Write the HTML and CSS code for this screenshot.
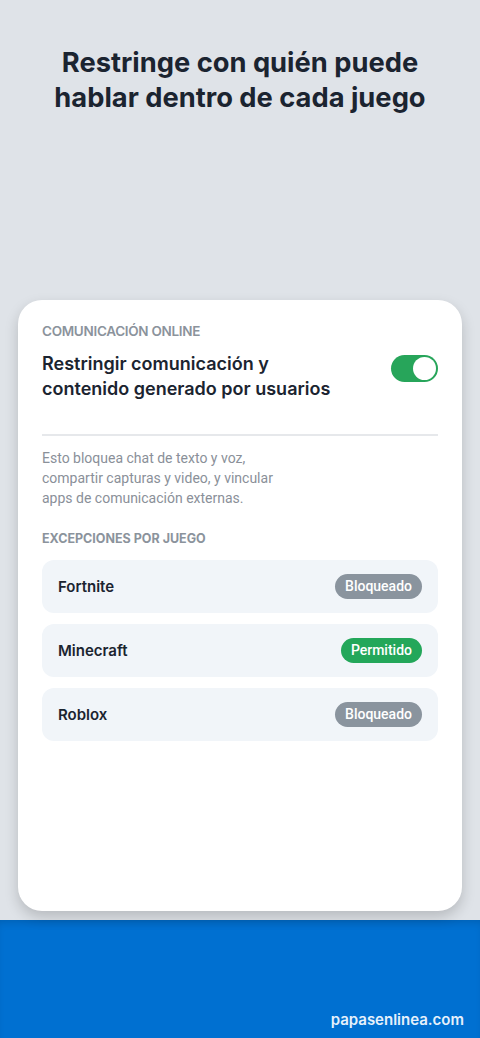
FILE: index.html
```html
<!DOCTYPE html>
<html lang="es">
<head>
    <meta charset="UTF-8">
    <meta name="viewport" content="width=device-width, initial-scale=1.0">
    <title>Comunicación online</title>
    <link rel="stylesheet" href="styles.css">
</head>
<body>
    <div class="page">
        <h1 class="headline">Restringe con quién puede hablar dentro de cada juego</h1>

        <div class="card">
            <div class="eyebrow">COMUNICACIÓN ONLINE</div>
            <div class="setting">
                <div class="setting-title">Restringir comunicación y contenido generado por usuarios</div>
                <div class="toggle on"><span class="knob"></span></div>
            </div>
            <div class="divider"></div>
            <p class="desc">Esto bloquea chat de texto y voz, compartir capturas y video, y vincular apps de comunicación externas.</p>

            <div class="section-label">EXCEPCIONES POR JUEGO</div>
            <div class="game-list">
                <div class="game">
                    <span class="game-name">Fortnite</span>
                    <span class="badge blocked">Bloqueado</span>
                </div>
                <div class="game">
                    <span class="game-name">Minecraft</span>
                    <span class="badge allowed">Permitido</span>
                </div>
                <div class="game">
                    <span class="game-name">Roblox</span>
                    <span class="badge blocked">Bloqueado</span>
                </div>
            </div>
        </div>
    </div>

    <footer class="footer">
        <span class="brand">papasenlinea.com</span>
    </footer>
</body>
</html>
```

FILE: styles.css
```css
body {
    margin: 0;
    font-family: Inter, "Noto Sans", sans-serif;
    background-color: #dfe3e8;
    color: #1b2430;
}
.page {
    height: 920px;
    padding: 0 18px 9px;
    box-sizing: border-box;
    display: flex;
    flex-direction: column;
}
.headline {
    margin: 45px 20px 0;
    font-size: 27.3px;
    line-height: 35px;
    font-weight: 700;
    text-align: center;
}
.card {
    margin-top: auto;
    height: 611px;
    box-sizing: border-box;
    background-color: #fff;
    border-radius: 24px;
    padding: 23px 24px;
    box-shadow: 0 6px 14px rgba(0, 0, 0, 0.18);
}
.eyebrow {
    font-size: 13.5px;
    font-weight: 600;
    color: #8b939c;
    letter-spacing: -0.3px;
}
.setting {
    display: flex;
    justify-content: space-between;
    align-items: flex-start;
    margin-top: 12px;
}
.setting-title {
    font-size: 18px;
    line-height: 25px;
    font-weight: 600;
    width: 300px;
}
.toggle {
    width: 47px;
    height: 27px;
    border-radius: 14px;
    background-color: #27a55a;
    margin-top: 4px;
    box-sizing: border-box;
    padding: 2px;
    display: flex;
    justify-content: flex-end;
}
.knob {
    width: 23px;
    height: 23px;
    border-radius: 50%;
    background-color: #fff;
}
.divider {
    height: 2px;
    background-color: #e6e8eb;
    margin-top: 33px;
}
.desc {
    margin: 12px 0 0;
    width: 240px;
    font-family: Roboto, sans-serif;
    font-size: 14px;
    line-height: 20px;
    color: #8a9099;
}
.section-label {
    margin-top: 23px;
    font-size: 12.5px;
    font-weight: 700;
    color: #8b939c;
}
.game-list {
    margin-top: 14px;
    display: flex;
    flex-direction: column;
    gap: 11px;
}
.game {
    height: 53px;
    box-sizing: border-box;
    padding: 0 16px;
    border-radius: 12px;
    background-color: #f1f5f9;
    display: flex;
    align-items: center;
    justify-content: space-between;
}
.game-name {
    font-size: 15px;
    font-weight: 600;
}
.badge {
    font-family: Roboto, sans-serif;
    font-size: 14px;
    font-weight: 500;
    color: #fff;
    padding: 4px 10px 5px;
    border-radius: 14px;
}
.badge.blocked {
    background-color: #8a949e;
}
.badge.allowed {
    background-color: #23a75a;
}
.footer {
    height: 118px;
    background-color: #0070d1;
    box-sizing: border-box;
    padding: 0 16px 9px;
    display: flex;
    align-items: flex-end;
    justify-content: flex-end;
    box-shadow: inset 0 6px 8px -4px rgba(0, 0, 0, 0.15);
}
.brand {
    font-size: 15px;
    font-weight: 600;
    color: #e6f0fb;
}
```
